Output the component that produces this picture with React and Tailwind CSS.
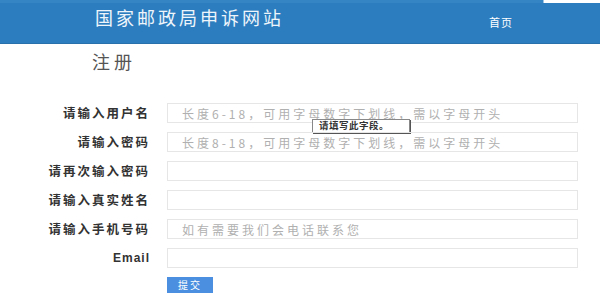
const fields = [
  { label: "请输入用户名", placeholder: "长度6-18，可用字母数字下划线，需以字母开头", tip: true },
  { label: "请输入密码", placeholder: "长度8-18，可用字母数字下划线，需以字母开头" },
  { label: "请再次输入密码", placeholder: "" },
  { label: "请输入真实姓名", placeholder: "" },
  { label: "请输入手机号码", placeholder: "如有需要我们会电话联系您" },
  { label: "Email", placeholder: "" },
];

export default function App() {
  return (
    <div
      className="w-[600px] h-[305px] bg-white overflow-hidden"
      style={{ fontFamily: '"Noto Sans CJK SC", "Liberation Sans", sans-serif' }}
    >
      {/* header */}
      <div className="relative h-[44px] bg-[#2c7dbf] border-t-[3px] border-[#3584c4] border-b border-b-[#2770ab] flex items-center">
        <div className="absolute right-0 -top-[3px] w-[57px] h-[3px] bg-white border-l border-[#9cc3e3]" />
        <h1 className="pl-[95px] text-[18px] leading-none tracking-[3px] text-[#eef5fb] -mt-[13px]">
          国家邮政局申诉网站
        </h1>
        <a className="ml-auto mr-[87px] -mt-[2px] text-[11px] leading-none tracking-[1px] text-white">首页</a>
      </div>

      <h2 className="pl-[92px] mt-[6px] text-[18px] leading-[22px] tracking-[4px] text-[#555]">注册</h2>

      <form className="mt-[31px] flex flex-col gap-[9px]">
        {fields.map((f) => (
          <div key={f.label} className="relative flex items-center h-[20px]">
            <label
              className={
                "w-[150px] text-right text-[#333] font-semibold leading-none " +
                (f.label === "Email"
                  ? "text-[12px] tracking-[1px]"
                  : "text-[12.5px] tracking-[2px]")
              }
              style={f.label === "Email" ? { fontFamily: '"Liberation Sans", sans-serif' } : undefined}
            >
              {f.label}
            </label>
            <input
              className="ml-[17px] w-[411px] h-[20px] border border-[#e6e6e6] pl-[14px] text-[12px] tracking-[3px] outline-none placeholder:text-[#b0b0b0]"
              placeholder={f.placeholder}
            />
            {f.tip && (
              <div className="absolute left-[312px] top-[16px] w-[98px] h-[14px] bg-white border border-[#888] shadow-[1px_1px_0_#555] flex items-center pl-[6px] text-[9.5px] leading-none font-semibold text-[#333] tracking-[0.5px]">
                请填写此字段。
              </div>
            )}
          </div>
        ))}
        <div className="flex pl-[167px]">
          <button
            type="button"
            className="w-[46px] h-[16px] bg-[#4a8fe0] text-white text-[10px] leading-none tracking-[2px]"
          >
            提交
          </button>
        </div>
      </form>
    </div>
  );
}
